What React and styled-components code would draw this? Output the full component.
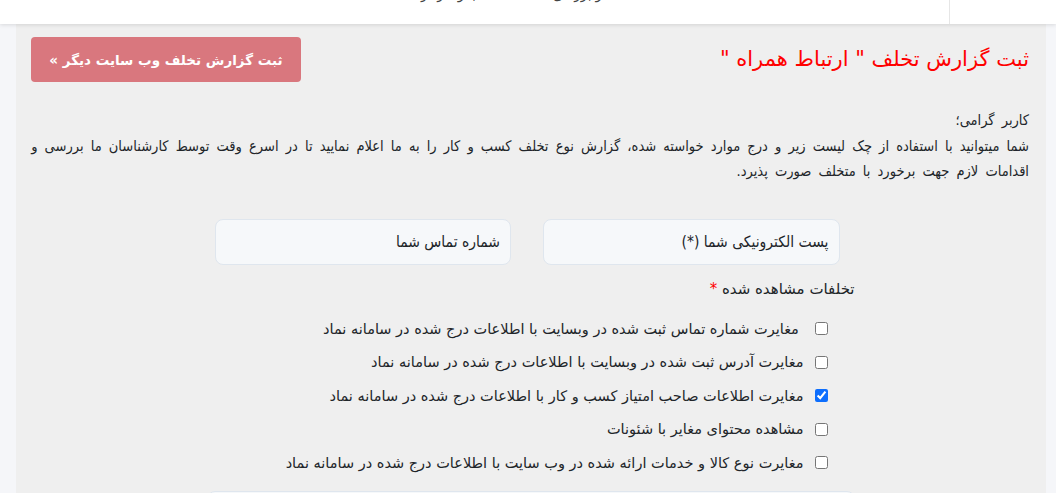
import React from 'react'
import styled, { createGlobalStyle } from 'styled-components'

const GlobalStyle = createGlobalStyle`
  html, body {
    margin: 0;
    padding: 0;
    background: #f5f6f9;
    font-family: "DejaVu Sans", "Noto Sans", sans-serif;
    color: #212529;
    overflow: hidden;
  }
`

const violations = [
  { text: ' مغایرت شماره تماس ثبت شده در وبسایت با اطلاعات درج شده در سامانه نماد', checked: false },
  { text: 'مغایرت آدرس ثبت شده در وبسایت با اطلاعات درج شده در سامانه نماد', checked: false },
  { text: 'مغایرت اطلاعات صاحب امتیاز کسب و کار با اطلاعات درج شده در سامانه نماد', checked: true },
  { text: 'مشاهده محتوای مغایر با شئونات', checked: false },
  { text: 'مغایرت نوع کالا و خدمات ارائه شده در وب سایت با اطلاعات درج شده در سامانه نماد', checked: false },
]

const App = () => (
  <Page dir="rtl">
    <GlobalStyle />
    <Header>
      <HeaderSide />
      <HeaderText>مشاهده و بررسی اطلاعات کسب و کار در سامانه نماد</HeaderText>
    </Header>
    <Panel>
      <TitleRow>
        <Title>ثبت گزارش تخلف " ارتباط همراه "</Title>
        <OtherButton>ثبت گزارش تخلف وب سایت دیگر »</OtherButton>
      </TitleRow>
      <Intro>
        کاربر گرامی؛
        <br />
        شما میتوانید با استفاده از چک لیست زیر و درج موارد خواسته شده، گزارش نوع تخلف کسب و کار را به ما اعلام نمایید تا در اسرع وقت توسط کارشناسان ما بررسی و اقدامات لازم جهت برخورد با متخلف صورت پذیرد.
      </Intro>
      <Form>
        <InputRow>
          <Field placeholder="پست الکترونیکی شما (*)" />
          <Field placeholder="شماره تماس شما" />
        </InputRow>
        <GroupLabel>
          تخلفات مشاهده شده <Star>*</Star>
        </GroupLabel>
        <CheckList>
          {violations.map((v, i) => (
            <CheckRow key={i}>
              <Check type="checkbox" defaultChecked={v.checked} />
              <span>{v.text}</span>
            </CheckRow>
          ))}
        </CheckList>
        <Description />
      </Form>
    </Panel>
  </Page>
)

const Page = styled.div`
  width: 1056px;
  height: 493px;
  overflow: hidden;
`

const Header = styled.div`
  height: 24px;
  background: #fff;
  box-shadow: 0 1px 4px rgba(0, 0, 0, 0.12);
  display: flex;
  position: relative;
  z-index: 1;
  overflow: hidden;
`

const HeaderSide = styled.div`
  width: 106px;
  border-left: 1px solid #e6e6e6;
`

const HeaderText = styled.div`
  margin-right: 300px;
  margin-top: -15px;
  font-size: 13px;
  line-height: 20px;
  color: #444;
  white-space: nowrap;
`

const Panel = styled.div`
  margin: 0 10px 0 16px;
  background: #efefef;
  height: 480px;
  padding: 12px 17px 0 15px;
  box-sizing: border-box;
`

const TitleRow = styled.div`
  display: flex;
  justify-content: space-between;
  align-items: flex-start;
`

const Title = styled.h1`
  margin: 8px 0 0;
  font-size: 21px;
  font-weight: normal;
  color: #ff0000;
  line-height: 30px;
`

const OtherButton = styled.button`
  margin-top: 1px;
  width: 270px;
  height: 45px;
  border: none;
  border-radius: 4px;
  background: #d9777e;
  color: #fff;
  font-family: "DejaVu Sans", sans-serif;
  font-weight: bold;
  font-size: 13.5px;
  cursor: pointer;
`

const Intro = styled.p`
  margin: 26px 0 0;
  font-family: "DejaVu Sans Condensed", "DejaVu Sans", sans-serif;
  font-size: 14.5px;
  word-spacing: 3px;
  line-height: 25.5px;
`

const Form = styled.div`
  width: 651px;
  margin: 34px auto 0;
  padding-right: 2px;
`

const InputRow = styled.div`
  display: flex;
  gap: 32px;
  padding: 0 15px 0 11px;
`

const Field = styled.input`
  flex: 1;
  height: 46px;
  box-sizing: border-box;
  border: 1.5px solid #dfe6ee;
  border-radius: 8px;
  background: #f6f8fa;
  padding: 0 10px;
  font-family: "DejaVu Sans Condensed", "DejaVu Sans", sans-serif;
  font-size: 15.5px;
  direction: rtl;
  outline: none;
  &::placeholder {
    color: #212529;
  }
`

const GroupLabel = styled.div`
  margin-top: 13px;
  font-size: 15px;
  line-height: 22px;
`

const Star = styled.span`
  color: #ff0000;
`

const CheckList = styled.div`
  margin-top: 18px;
  padding-right: 27px;
  display: flex;
  flex-direction: column;
  gap: 11.5px;
`

const CheckRow = styled.label`
  display: flex;
  align-items: center;
  gap: 11px;
  font-size: 14.5px;
  line-height: 22px;
  white-space: pre;
`

const Check = styled.input`
  margin: 0;
  width: 13px;
  height: 13px;
  accent-color: #0d6efd;
`

const Description = styled.div`
  margin-top: 17px;
  width: 646px;
  height: 40px;
  border: 1.5px solid #dfe6ee;
  border-radius: 8px;
  background: #f6f8fa;
`

export default App
